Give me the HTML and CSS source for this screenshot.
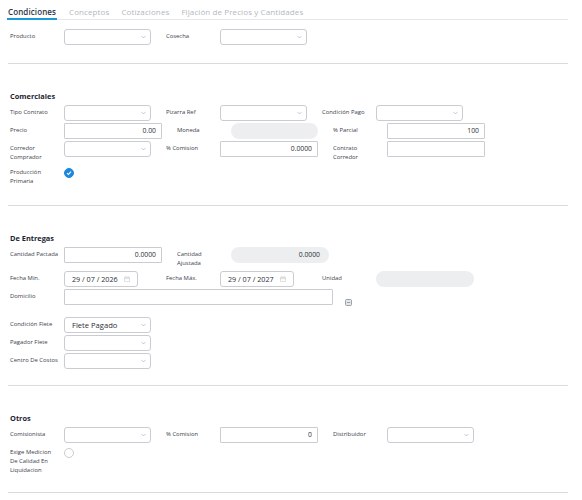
FILE: index.html
```html
<!DOCTYPE html>
<html lang="es">
<head>
    <meta charset="UTF-8">
    <title>Condiciones</title>
    <link rel="stylesheet" href="styles.css">
</head>
<body>
    <div class="page">
        <div class="tabs">
            <a class="tab active">Condiciones</a>
            <a class="tab">Conceptos</a>
            <a class="tab">Cotizaciones</a>
            <a class="tab">Fijación de Precios y Cantidades</a>
        </div>

        <section class="section first">
            <div class="row">
                <div class="field">
                    <label>Producto</label>
                    <div class="select"><span></span><svg class="chev" viewBox="0 0 8 5"><path d="M1 1l3 3 3-3"/></svg></div>
                </div>
                <div class="field">
                    <label>Cosecha</label>
                    <div class="select"><span></span><svg class="chev" viewBox="0 0 8 5"><path d="M1 1l3 3 3-3"/></svg></div>
                </div>
            </div>
        </section>

        <section class="section">
            <h2>Comerciales</h2>
            <div class="row">
                <div class="field">
                    <label>Tipo Contrato</label>
                    <div class="select"><span></span><svg class="chev" viewBox="0 0 8 5"><path d="M1 1l3 3 3-3"/></svg></div>
                </div>
                <div class="field">
                    <label>Pizarra Ref</label>
                    <div class="select"><span></span><svg class="chev" viewBox="0 0 8 5"><path d="M1 1l3 3 3-3"/></svg></div>
                </div>
                <div class="field">
                    <label>Condición Pago</label>
                    <div class="select"><span></span><svg class="chev" viewBox="0 0 8 5"><path d="M1 1l3 3 3-3"/></svg></div>
                </div>
            </div>
            <div class="row">
                <div class="field">
                    <label>Precio</label>
                    <div class="input">0.00</div>
                </div>
                <div class="field">
                    <label>Moneda</label>
                    <div class="readonly"></div>
                </div>
                <div class="field">
                    <label>% Parcial</label>
                    <div class="input">100</div>
                </div>
            </div>
            <div class="row">
                <div class="field">
                    <label class="narrow">Corredor Comprador</label>
                    <div class="select"><span></span><svg class="chev" viewBox="0 0 8 5"><path d="M1 1l3 3 3-3"/></svg></div>
                </div>
                <div class="field">
                    <label>% Comision</label>
                    <div class="input">0.0000</div>
                </div>
                <div class="field">
                    <label class="narrow">Contrato Corredor</label>
                    <div class="input"></div>
                </div>
            </div>
            <div class="row">
                <div class="field">
                    <label class="narrow">Producción Primaria</label>
                    <span class="check on"><svg viewBox="0 0 10 10"><path d="M2.6 5.2l1.7 1.7 3.2-3.5"/></svg></span>
                </div>
            </div>
        </section>

        <section class="section delivery">
            <h2>De Entregas</h2>
            <div class="row">
                <div class="field">
                    <label>Cantidad Pactada</label>
                    <div class="input">0.0000</div>
                </div>
                <div class="field">
                    <label class="narrow">Cantidad Ajustada</label>
                    <div class="readonly wide">0.0000</div>
                </div>
            </div>
            <div class="row">
                <div class="field">
                    <label>Fecha Min.</label>
                    <div class="date">29 / 07 / 2026 <svg class="cal" viewBox="0 0 8 8"><rect x="0.5" y="1.5" width="7" height="6" rx="0.5"/><path d="M0.5 3.5h7M2.5 0.5v2M5.5 0.5v2"/></svg></div>
                </div>
                <div class="field">
                    <label>Fecha Máx.</label>
                    <div class="date">29 / 07 / 2027 <svg class="cal" viewBox="0 0 8 8"><rect x="0.5" y="1.5" width="7" height="6" rx="0.5"/><path d="M0.5 3.5h7M2.5 0.5v2M5.5 0.5v2"/></svg></div>
                </div>
                <div class="field">
                    <label>Unidad</label>
                    <div class="readonly wide"></div>
                </div>
            </div>
            <div class="row">
                <div class="field">
                    <label>Domicilio</label>
                    <div class="input address"></div>
                    <span class="mini-btn"></span>
                </div>
            </div>
            <div class="row spaced">
                <div class="field">
                    <label>Condición Flete</label>
                    <div class="select"><span class="value">Flete Pagado</span><svg class="chev" viewBox="0 0 8 5"><path d="M1 1l3 3 3-3"/></svg></div>
                </div>
            </div>
            <div class="row">
                <div class="field">
                    <label>Pagador Flete</label>
                    <div class="select"><span></span><svg class="chev" viewBox="0 0 8 5"><path d="M1 1l3 3 3-3"/></svg></div>
                </div>
            </div>
            <div class="row">
                <div class="field">
                    <label>Centro De Costos</label>
                    <div class="select"><span></span><svg class="chev" viewBox="0 0 8 5"><path d="M1 1l3 3 3-3"/></svg></div>
                </div>
            </div>
        </section>

        <section class="section last">
            <h2>Otros</h2>
            <div class="row">
                <div class="field">
                    <label>Comisionista</label>
                    <div class="select"><span></span><svg class="chev" viewBox="0 0 8 5"><path d="M1 1l3 3 3-3"/></svg></div>
                </div>
                <div class="field">
                    <label>% Comision</label>
                    <div class="input">0</div>
                </div>
                <div class="field">
                    <label>Distribuidor</label>
                    <div class="select"><span></span><svg class="chev" viewBox="0 0 8 5"><path d="M1 1l3 3 3-3"/></svg></div>
                </div>
            </div>
            <div class="row">
                <div class="field">
                    <label class="narrow">Exige Medicion De Calidad En Liquidacion</label>
                    <span class="check"></span>
                </div>
            </div>
        </section>
    </div>
</body>
</html>
```

FILE: styles.css
```css
body {
    margin: 0;
    padding: 0;
    background-color: #fff;
    font-family: 'Open Sans', 'Noto Sans', sans-serif;
    color: #3d4350;
}
.page {
    padding: 0 14px 0 8px;
}
.tabs {
    display: flex;
    gap: 12px;
    height: 20px;
    border-bottom: 1px solid #e6e8eb;
    box-sizing: border-box;
}
.tab {
    font-size: 8px;
    line-height: 14px;
    padding-top: 5px;
    color: #b3b8c0;
    letter-spacing: 0.1px;
}
.tab.active {
    color: #2b3446;
    font-weight: 600;
    border-bottom: 2px solid #1c9ad6;
    margin-bottom: -1px;
    padding-left: 1px;
    padding-right: 1px;
    margin-left: -1px;
}
.section {
    padding: 27px 0 17px;
    border-bottom: 1px solid #d9dbde;
}
.section.first {
    padding-top: 9px;
    padding-bottom: 16px;
}
.section.delivery {
    padding-bottom: 14px;
}
.section.last {
    padding-bottom: 14px;
}
h2 {
    margin: 0 0 4px 2px;
    font-size: 7.4px;
    line-height: 10px;
    font-weight: 700;
    color: #1d2431;
}
.row {
    display: flex;
    align-items: flex-start;
    padding-left: 2px;
    margin-bottom: 2px;
}
.row.spaced {
    margin-top: 11px;
}
.field {
    display: flex;
    align-items: flex-start;
    min-width: 141px;
    margin-right: 15px;
}
label {
    width: 54px;
    flex-shrink: 0;
    box-sizing: border-box;
    padding-top: 3px;
    font-size: 5.9px;
    line-height: 9.3px;
    color: #3b414b;
}
label.narrow {
    padding-right: 12px;
}
.select,
.input,
.date,
.readonly {
    box-sizing: border-box;
    height: 16px;
    font-size: 6.8px;
    color: #2b2f36;
}
.select {
    width: 87px;
    border: 1px solid #c9ccd1;
    border-radius: 3px;
    display: flex;
    align-items: center;
    justify-content: space-between;
    padding: 0 4px 0 7px;
}
.select .value {
    font-size: 7.6px;
    color: #2b2f36;
}
.chev {
    width: 5px;
    height: 4px;
    fill: none;
    stroke: #8ea6c4;
    stroke-width: 1;
}
.input {
    width: 98px;
    border: 1px solid #c9ccd1;
    border-radius: 1px;
    text-align: right;
    padding: 0 5px;
    line-height: 13px;
}
.input.address {
    width: 269px;
}
.readonly {
    width: 87px;
    background-color: #eceef0;
    border-radius: 8px;
    text-align: right;
    padding: 0 9px;
    line-height: 16px;
}
.readonly.wide {
    width: 98px;
}
.date {
    width: 74px;
    border: 1px solid #c9ccd1;
    border-radius: 3px;
    padding: 0 7px;
    display: flex;
    align-items: center;
    gap: 6px;
    font-size: 7.2px;
}
.cal {
    width: 6px;
    height: 6px;
    fill: none;
    stroke: #c3c6cb;
    stroke-width: 0.8;
}
.check {
    box-sizing: border-box;
    width: 10px;
    height: 10px;
    border-radius: 50%;
    border: 1px solid #c9ccd1;
    margin-top: 3px;
}
.check.on {
    background-color: #1e88dc;
    border-color: #1e88dc;
    display: flex;
}
.check svg {
    width: 8px;
    height: 8px;
    fill: none;
    stroke: #fff;
    stroke-width: 1.4;
}
.mini-btn {
    box-sizing: border-box;
    width: 7px;
    height: 7px;
    margin: 10px 0 0 12px;
    border: 1px solid #9ba1aa;
    border-radius: 1.5px;
    background: linear-gradient(#9ba1aa, #9ba1aa) center / 3px 1px no-repeat, #e4e6e9;
}
```
